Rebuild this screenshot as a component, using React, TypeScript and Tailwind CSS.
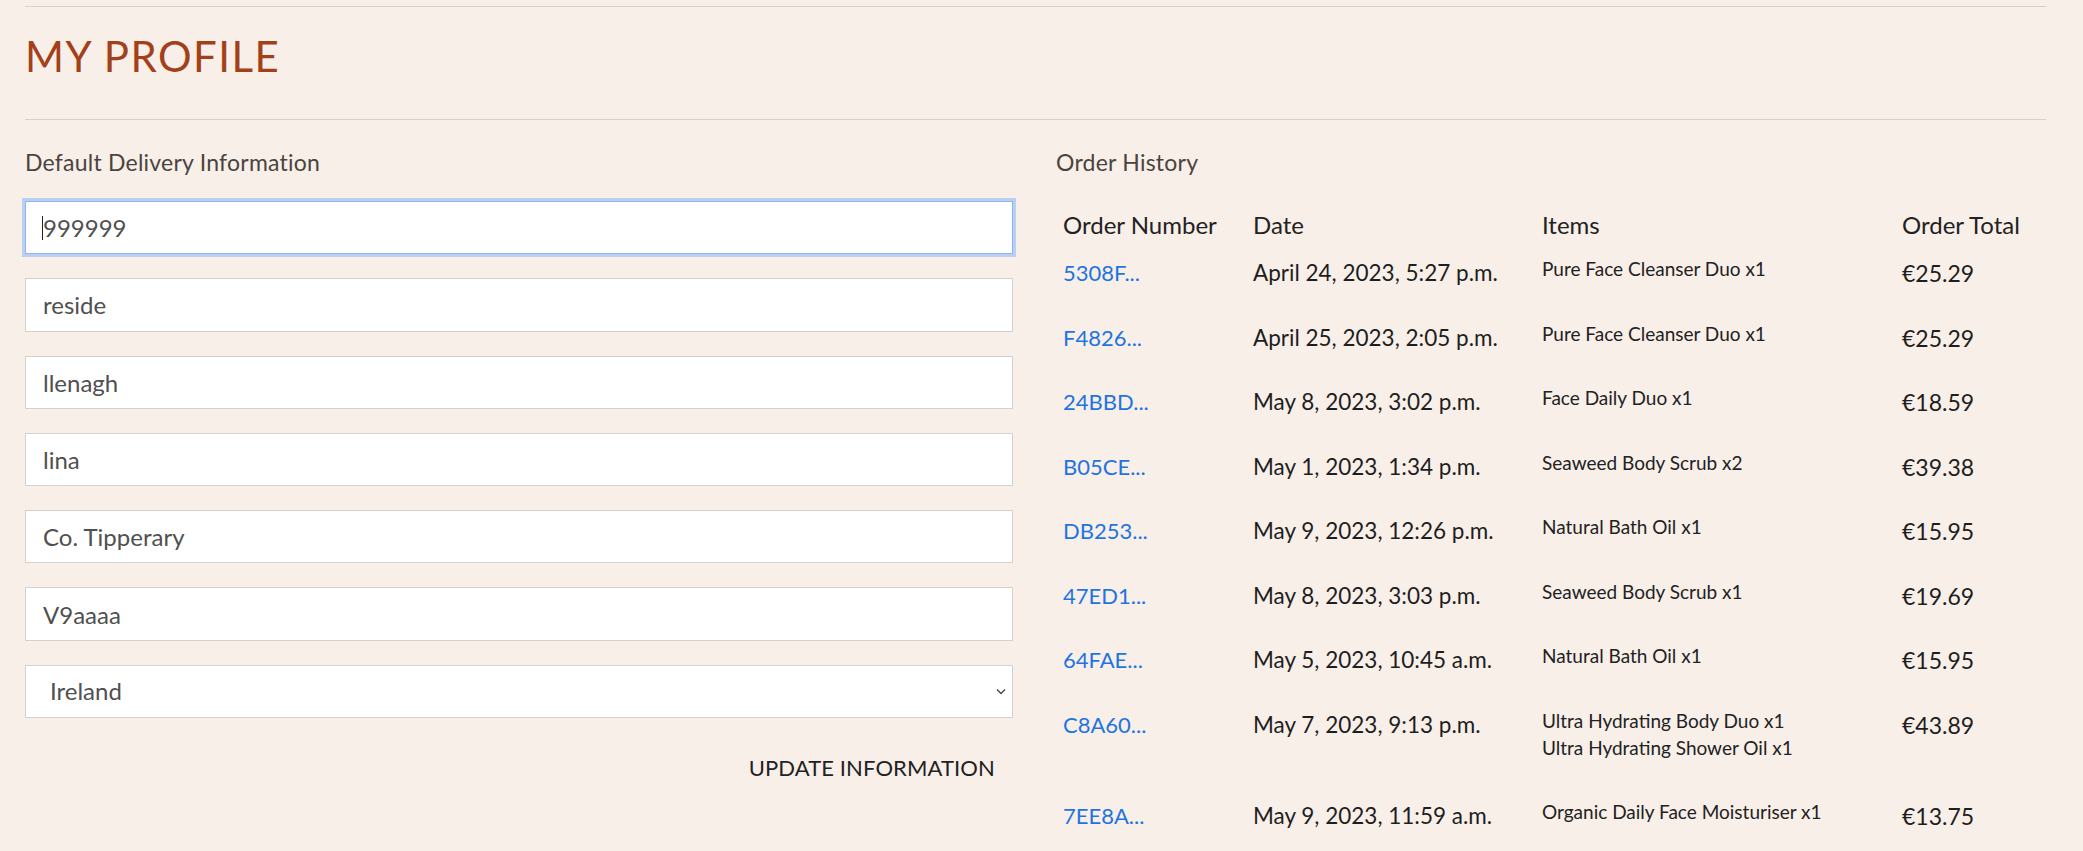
import React from 'react';

type Order = {
  id: string;
  date: string;
  items: string[];
  total: string;
};

const orders: Order[] = [
  { id: '5308F...', date: 'April 24, 2023, 5:27 p.m.', items: ['Pure Face Cleanser Duo x1'], total: '€25.29' },
  { id: 'F4826...', date: 'April 25, 2023, 2:05 p.m.', items: ['Pure Face Cleanser Duo x1'], total: '€25.29' },
  { id: '24BBD...', date: 'May 8, 2023, 3:02 p.m.', items: ['Face Daily Duo x1'], total: '€18.59' },
  { id: 'B05CE...', date: 'May 1, 2023, 1:34 p.m.', items: ['Seaweed Body Scrub x2'], total: '€39.38' },
  { id: 'DB253...', date: 'May 9, 2023, 12:26 p.m.', items: ['Natural Bath Oil x1'], total: '€15.95' },
  { id: '47ED1...', date: 'May 8, 2023, 3:03 p.m.', items: ['Seaweed Body Scrub x1'], total: '€19.69' },
  { id: '64FAE...', date: 'May 5, 2023, 10:45 a.m.', items: ['Natural Bath Oil x1'], total: '€15.95' },
  {
    id: 'C8A60...',
    date: 'May 7, 2023, 9:13 p.m.',
    items: ['Ultra Hydrating Body Duo x1', 'Ultra Hydrating Shower Oil x1'],
    total: '€43.89',
  },
  { id: '7EE8A...', date: 'May 9, 2023, 11:59 a.m.', items: ['Organic Daily Face Moisturiser x1'], total: '€13.75' },
];

const fields = ['reside', 'llenagh', 'lina', 'Co. Tipperary', 'V9aaaa'];

const inputClass =
  "w-full h-[53.3px] bg-white border border-[#d4d0cd] pl-[17px] text-[24px] text-[#505050] outline-none font-['Lato',sans-serif]";

const App: React.FC = () => {
  return (
    <div className="min-h-screen bg-[#f8efe9] font-['Lato',sans-serif] text-[#222]">
      <div className="pl-[25px] pr-[37px] pt-[6px] pb-10">
        <div className="h-px bg-[#d8d0cb]" />

        {/* Page title */}
        <h1 className="mt-[24px] text-[42px] leading-[50px] tracking-[0.035em] text-[#a3401a]">MY PROFILE</h1>

        <div className="mt-[38px] h-px bg-[#d8d0cb]" />

        <div className="grid grid-cols-[988px_1fr] gap-[43px] mt-[28px]">
          {/* Delivery info form */}
          <div>
            <p className="text-[23px] leading-[28px] text-[#4a4440] tracking-[0.01em]">Default Delivery Information</p>
            <form className="mt-[25px] flex flex-col gap-[24px]">
              <div className="relative">
                <input
                  defaultValue="999999"
                  className="w-full h-[53.3px] bg-white border border-[#86b7fe] shadow-[0_0_0_3px_rgba(13,110,253,0.25)] pl-[17px] text-[24px] text-[#505050] outline-none font-['Lato',sans-serif]"
                />
                <span className="absolute left-[17px] top-[15px] w-px h-[24px] bg-[#222]" />
              </div>
              {fields.map((f) => (
                <input key={f} defaultValue={f} className={inputClass} />
              ))}
              <div className="relative">
                <select
                  defaultValue="IE"
                  className="w-full h-[53.3px] appearance-none bg-white border border-[#d4d0cd] pl-[24px] text-[24px] text-[#505050] outline-none font-['Lato',sans-serif]"
                >
                  <option value="IE">Ireland</option>
                </select>
                <svg
                  className="absolute right-[7px] top-[23px] pointer-events-none"
                  width="10"
                  height="7"
                  viewBox="0 0 10 7"
                  fill="none"
                >
                  <path d="M1 1.5L5 5.5L9 1.5" stroke="#444" strokeWidth="1.3" />
                </svg>
              </div>
            </form>
            <div className="flex justify-end mt-[37px] pr-[18px]">
              <button type="button" className="text-[22px] leading-[26px] text-[#222] tracking-[0.005em]">
                UPDATE INFORMATION
              </button>
            </div>
          </div>

          {/* Order history */}
          <div>
            <p className="text-[23px] leading-[28px] text-[#4a4440] tracking-[0.01em]">Order History</p>
            <div className="mt-[34px] pl-[7px]">
              <div className="grid grid-cols-[190px_289px_360px_1fr] text-[24px] leading-[29px] text-[#222]">
                <div>Order Number</div>
                <div>Date</div>
                <div>Items</div>
                <div>Order Total</div>
              </div>
              {orders.map((o) => (
                <div key={o.id} className="grid grid-cols-[190px_289px_360px_1fr] items-start pt-[16px] pb-[21.5px]">
                  <div className="h-[27px]">
                    <a href="#" className="block mt-[4px] text-[22px] leading-[28px] text-[#1f74e0]">
                      {o.id}
                    </a>
                  </div>
                  <div className="h-[27px]">
                    <div className="mt-[4px] text-[22.5px] leading-[28px] text-[#1e1e1e]">{o.date}</div>
                  </div>
                  <div className="text-[19px] leading-[27px] text-[#222]">
                    {o.items.map((i) => (
                      <div key={i}>{i}</div>
                    ))}
                  </div>
                  <div className="h-[27px]">
                    <div className="mt-[4px] text-[23px] leading-[28px] text-[#1e1e1e]">{o.total}</div>
                  </div>
                </div>
              ))}
            </div>
          </div>
        </div>
      </div>
    </div>
  );
};

export default App;
